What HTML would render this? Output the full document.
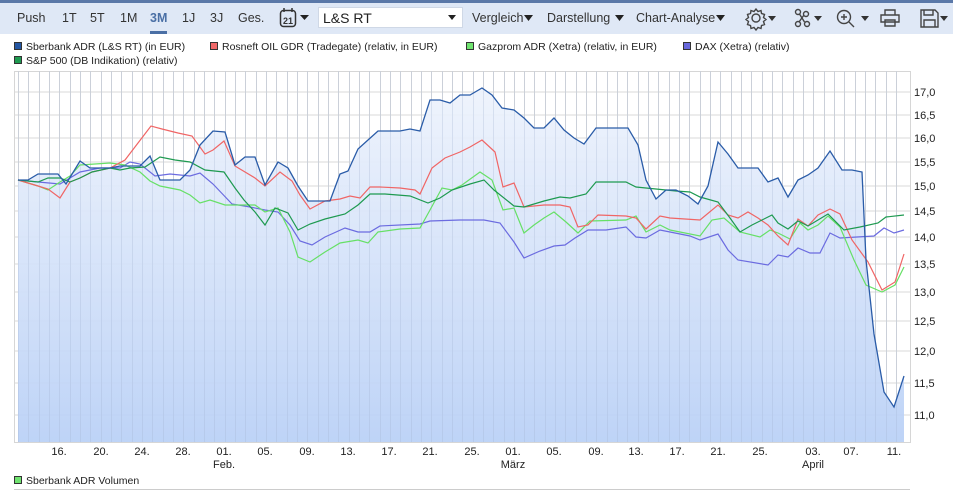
<!DOCTYPE html>
<html><head><meta charset="utf-8"><style>
*{margin:0;padding:0;box-sizing:border-box}
body{width:953px;height:491px;background:#fff;font-family:"Liberation Sans",sans-serif;color:#222;position:relative;overflow:hidden}
.top{position:absolute;left:0;top:0;width:953px;height:3px;background:#5a78a8}
.tb{position:absolute;left:0;top:3px;width:953px;height:31px;background:#dfe8f6}
.t{position:absolute;top:11px;font-size:12.5px;color:#333}
.sel{position:absolute;left:318px;top:7px;width:145px;height:21px;background:#fff;border:1px solid #cfd8e6;font-size:14px;padding:2px 4px}
.lg{position:absolute;font-size:10.5px;color:#222;white-space:nowrap}
.lg i{display:inline-block;width:8px;height:8px;border:1px solid #333;margin-right:4px;vertical-align:-0px}
</style></head><body>
<div class="top"></div>
<div class="tb"></div>
<div class="t" style="left:17px">Push</div>
<div class="t" style="left:62px">1T</div>
<div class="t" style="left:90px">5T</div>
<div class="t" style="left:120px">1M</div>
<div class="t" style="left:150px;color:#4a6fa5;font-weight:bold">3M</div>
<div style="position:absolute;left:150px;top:31px;width:17px;height:3px;background:#4a6fa5"></div>
<div class="t" style="left:182px">1J</div>
<div class="t" style="left:210px">3J</div>
<div class="t" style="left:238px">Ges.</div>
<svg style="position:absolute;left:279px;top:7px" width="36" height="22">
<rect x="1.5" y="3.5" width="15" height="16" rx="3" fill="none" stroke="#333" stroke-width="1.5"/>
<line x1="5" y1="1" x2="5" y2="5" stroke="#333" stroke-width="1.5"/><line x1="13" y1="1" x2="13" y2="5" stroke="#333" stroke-width="1.5"/>
<text x="9" y="17" font-size="9" font-weight="bold" text-anchor="middle" font-family="Liberation Sans" fill="#333">21</text>
<path d="M21 8h9l-4.5 5z" fill="#222"/></svg>
<div class="sel">L&amp;S RT<svg style="position:absolute;right:6px;top:7px" width="8" height="5"><path d="M0 0h8l-4 5z" fill="#222"/></svg></div>
<div class="t" style="left:472px">Vergleich</div><svg style="position:absolute;left:524px;top:15px" width="9" height="6"><path d="M0 0h9l-4.5 6z" fill="#222"/></svg>
<div class="t" style="left:547px">Darstellung</div><svg style="position:absolute;left:615px;top:15px" width="9" height="6"><path d="M0 0h9l-4.5 6z" fill="#222"/></svg>
<div class="t" style="left:636px">Chart-Analyse</div><svg style="position:absolute;left:716px;top:15px" width="9" height="6"><path d="M0 0h9l-4.5 6z" fill="#222"/></svg>
<svg style="position:absolute;left:740px;top:4px" width="213" height="28" fill="none" stroke="#444" stroke-width="1.4">
<circle cx="16" cy="14" r="4"/><path d="M16 5l2 2.5 3-1 .5 3 3 1-1 3 2.5 2-2.5 2 1 3-3 1-.5 3-3-1-2 2.5-2-2.5-3 1-.5-3-3-1 1-3-2.5-2 2.5-2-1-3 3-1 .5-3 3 1z"/>
<path d="M28 12h8l-4 5z" fill="#333" stroke="none"/>
<circle cx="58" cy="8" r="2.5"/><circle cx="66" cy="10" r="2.5"/><circle cx="58" cy="20" r="2.5"/><circle cx="67" cy="20" r="2.5"/><path d="M59.5 10l5 8M64 11l-5 7"/>
<path d="M74 12h8l-4 5z" fill="#333" stroke="none"/>
<circle cx="104" cy="13" r="6.5"/><path d="M109 18l5 5M101 13h6M104 10v6"/>
<path d="M121 12h8l-4 5z" fill="#333" stroke="none"/>
<path d="M145 11v-5h10v5M141 11h18v7h-18zM145 16h10v6h-10z"/>
<path d="M181 6h14l3 3v14h-17zM184 6v5h9v-5M184 23v-7h11v7"/>
<path d="M200 12h8l-4 5z" fill="#333" stroke="none"/>
</svg>
<div class="lg" style="left:14px;top:41px"><i style="background:#2457a3"></i>Sberbank ADR (L&amp;S RT) (in EUR)</div>
<div class="lg" style="left:210px;top:41px"><i style="background:#f06868"></i>Rosneft OIL GDR (Tradegate) (relativ, in EUR)</div>
<div class="lg" style="left:466px;top:41px"><i style="background:#6fe36f"></i>Gazprom ADR (Xetra) (relativ, in EUR)</div>
<div class="lg" style="left:683px;top:41px"><i style="background:#6868dc"></i>DAX (Xetra) (relativ)</div>
<div class="lg" style="left:14px;top:55px"><i style="background:#1e9a50"></i>S&amp;P 500 (DB Indikation) (relativ)</div>
<div class="lg" style="left:14px;top:475px"><i style="background:#6fe36f"></i>Sberbank ADR Volumen</div>
<div style="position:absolute;left:14px;top:489px;width:896px;height:1px;background:#ccc"></div>
<svg style="position:absolute;left:0;top:0" width="953" height="491" font-family="Liberation Sans" font-size="11">
<defs><linearGradient id="g" x1="0" y1="0" x2="0" y2="1"><stop offset="0" stop-color="#eef3fc"/><stop offset="1" stop-color="#b9d0f6"/></linearGradient></defs>
<rect x="14.5" y="71.5" width="896" height="371" fill="none" stroke="#d6d6d6"/>
<g id="vg" stroke="#dadada"></g>
<g stroke="#d8d8d8">
<line x1="14" x2="910" y1="92" y2="92"/><line x1="14" x2="910" y1="115" y2="115"/><line x1="14" x2="910" y1="138" y2="138"/><line x1="14" x2="910" y1="162" y2="162"/><line x1="14" x2="910" y1="186" y2="186"/><line x1="14" x2="910" y1="211" y2="211"/><line x1="14" x2="910" y1="237" y2="237"/><line x1="14" x2="910" y1="264" y2="264"/><line x1="14" x2="910" y1="292" y2="292"/><line x1="14" x2="910" y1="321" y2="321"/><line x1="14" x2="910" y1="351" y2="351"/><line x1="14" x2="910" y1="383" y2="383"/><line x1="14" x2="910" y1="415" y2="415"/>
</g>
<path id="area" fill="url(#g)" opacity="0.93"/>
<g id="vg2" stroke="#a8b8d8" stroke-opacity="0.3"></g>
<g fill="none" stroke-width="1.2">
<polyline id="dax" stroke="#6b6be0"/>
<polyline id="gaz" stroke="#66e066"/>
<polyline id="ros" stroke="#f06565"/>
<polyline id="sp" stroke="#1e9a50"/>
<polyline id="sb" stroke="#2a5ca8" stroke-width="1.3"/>
</g>
<g fill="#222">
<text x="914" y="96">17,0</text><text x="914" y="119">16,5</text><text x="914" y="142">16,0</text><text x="914" y="166">15,5</text><text x="914" y="190">15,0</text><text x="914" y="215">14,5</text><text x="914" y="241">14,0</text><text x="914" y="268">13,5</text><text x="914" y="296">13,0</text><text x="914" y="325">12,5</text><text x="914" y="355">12,0</text><text x="914" y="387">11,5</text><text x="914" y="419">11,0</text>
</g>
<g fill="#222" text-anchor="middle">
<text x="59" y="455">16.</text><text x="101" y="455">20.</text><text x="142" y="455">24.</text><text x="183" y="455">28.</text><text x="224" y="455">01.</text><text x="265" y="455">05.</text><text x="307" y="455">09.</text><text x="348" y="455">13.</text><text x="389" y="455">17.</text><text x="430" y="455">21.</text><text x="472" y="455">25.</text><text x="513" y="455">01.</text><text x="554" y="455">05.</text><text x="596" y="455">09.</text><text x="636" y="455">13.</text><text x="677" y="455">17.</text><text x="718" y="455">21.</text><text x="760" y="455">25.</text><text x="813" y="455">03.</text><text x="851" y="455">07.</text><text x="894" y="455">11.</text>
<text x="224" y="468">Feb.</text><text x="513" y="468">März</text><text x="813" y="468">April</text>
</g>
</svg>
<script>
var sb="18,180 28,180 38,174 58,174 66,184 80,161 90,168 110,168 120,166 140,166 150,156 160,180 180,180 190,170 200,145 213,131 225,132 235,165 245,157 255,157 265,185 278,162 288,168 298,186 308,201 330,201 340,174 348,171 358,149 368,140 378,131 400,131 410,129 420,131 430,100 440,100 450,103 460,95 470,95 482,88 492,95 502,108 514,110 524,118 534,128 544,128 554,118 564,130 574,138 584,144 596,128 628,128 638,145 646,180 656,199 666,190 676,190 688,196 698,204 708,186 718,142 728,154 738,168 758,168 768,182 778,178 788,197 798,180 808,175 818,168 830,151 842,170 852,170 862,172 866,260 874,334 884,392 894,407 904,376";
var ros="18,180 38,186 48,189 60,198 70,182 80,178 92,172 110,168 125,160 138,143 151,126 162,129 178,133 192,136 205,154 213,150 224,141 235,166 255,178 265,186 280,172 292,181 300,195 310,209 325,201 340,199 350,196 360,198 370,187 380,187 400,188 415,190 420,194 432,168 445,158 460,152 470,147 482,140 495,152 503,187 514,183 524,207 544,205 560,205 570,207 578,227 588,225 598,215 626,216 636,218 646,229 660,216 670,218 700,220 718,205 728,215 738,218 748,212 758,218 768,225 778,236 788,245 798,219 808,226 818,215 830,209 840,214 852,240 868,262 882,290 895,282 904,254";
var gaz="18,180 38,186 48,190 60,182 70,176 80,165 110,163 125,165 140,172 150,181 160,186 180,190 190,195 200,203 210,200 225,205 255,205 265,212 278,208 290,232 298,257 310,262 325,252 340,243 358,240 368,243 378,232 400,229 420,228 430,210 442,188 452,190 462,185 480,172 492,180 503,210 514,208 524,233 534,225 544,218 554,212 566,222 578,233 590,221 626,220 636,216 646,232 660,225 670,230 700,236 712,220 724,218 740,232 760,237 770,230 778,233 790,239 800,223 808,230 818,225 828,216 840,227 854,260 866,285 882,292 895,285 904,267";
var sp="18,180 38,182 48,178 60,178 70,182 80,178 92,172 110,168 120,170 130,168 145,167 160,157 175,160 190,162 205,170 224,172 235,188 244,200 255,212 265,225 275,208 288,213 298,230 310,224 325,219 345,214 358,205 370,194 385,194 410,196 428,203 440,198 452,190 470,184 484,180 494,190 514,206 524,207 544,201 560,197 570,198 586,194 596,182 626,182 636,187 676,191 690,192 700,197 718,202 730,218 740,232 752,225 772,215 778,223 788,229 798,221 808,226 818,220 828,214 844,230 860,227 878,223 886,217 904,215";
var dax="18,180 38,182 60,184 80,172 100,168 120,168 130,162 140,164 155,176 170,174 190,176 200,173 213,184 232,204 250,207 265,210 278,212 290,225 300,241 312,245 325,237 345,228 358,232 370,232 380,226 420,224 430,221 460,220 484,220 500,223 514,242 524,258 540,251 554,246 565,245 575,238 588,230 606,230 626,227 636,237 646,238 660,230 670,232 690,236 700,240 718,234 728,250 738,260 768,265 778,255 788,257 798,248 810,253 820,253 830,233 840,238 874,236 884,228 894,233 904,230";
function s(id,v){document.getElementById(id).setAttribute('points',v);}
s('sb',sb);s('ros',ros);s('gaz',gaz);s('sp',sp);s('dax',dax);
document.getElementById('area').setAttribute('d','M'+sb.replace(/ /g,' L')+' L904,442 L18,442 Z');
var h='';for(var x=18;x<906;x+=10.33){var xx=Math.round(x)+.5;h+='<line x1="'+xx+'" x2="'+xx+'" y1="71" y2="442"/>';}
document.getElementById('vg').innerHTML=h;document.getElementById('vg2').innerHTML=h;
</script>
</body></html>
